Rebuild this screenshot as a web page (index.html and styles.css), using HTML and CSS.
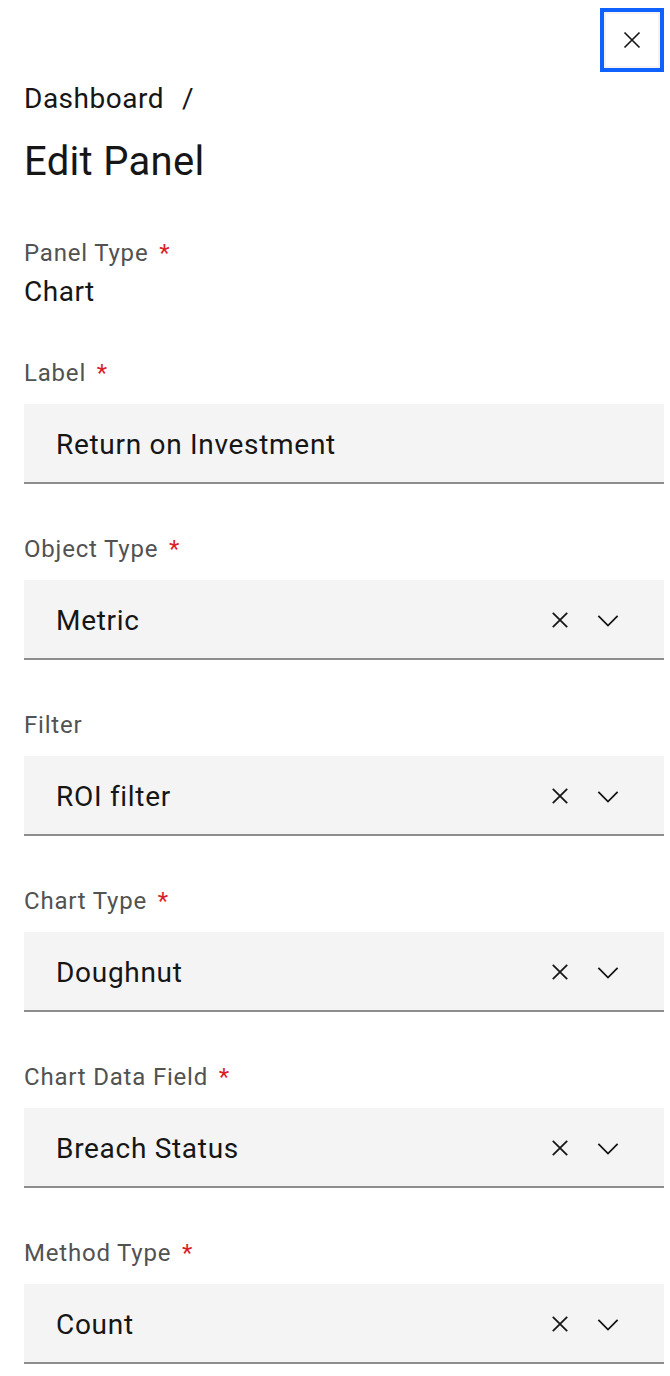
FILE: index.html
```html
<!DOCTYPE html>
<html lang="en">
<head>
<meta charset="utf-8">
<title>Edit Panel</title>
<link rel="stylesheet" href="styles.css">
</head>
<body>
<div class="panel">
  <div class="topbar">
    <button class="close-btn" aria-label="Close">
      <svg width="24" height="24" viewBox="0 0 24 24"><path d="M3 3L21 21M21 3L3 21" stroke="#161616" stroke-width="2" fill="none"/></svg>
    </button>
  </div>
  <nav class="breadcrumb"><span>Dashboard</span><span class="sep">/</span></nav>
  <h1 class="title">Edit Panel</h1>

  <div class="readonly">
    <div class="label">Panel Type <span class="req">*</span></div>
    <div class="value">Chart</div>
  </div>

  <div class="field">
    <div class="label">Label <span class="req">*</span></div>
    <div class="box"><span class="text">Return on Investment</span></div>
  </div>

  <div class="field">
    <div class="label">Object Type <span class="req">*</span></div>
    <div class="box"><span class="text">Metric</span>
      <span class="icons">
        <svg class="ic-x" width="20" height="20" viewBox="0 0 20 20"><path d="M2 2L18 18M18 2L2 18" stroke="#161616" stroke-width="2" fill="none"/></svg>
        <svg class="ic-chev" width="24" height="14" viewBox="0 0 24 14"><path d="M1.5 2L12 12.5L22.5 2" stroke="#161616" stroke-width="2" fill="none"/></svg>
      </span>
    </div>
  </div>

  <div class="field">
    <div class="label">Filter</div>
    <div class="box"><span class="text">ROI filter</span>
      <span class="icons">
        <svg class="ic-x" width="20" height="20" viewBox="0 0 20 20"><path d="M2 2L18 18M18 2L2 18" stroke="#161616" stroke-width="2" fill="none"/></svg>
        <svg class="ic-chev" width="24" height="14" viewBox="0 0 24 14"><path d="M1.5 2L12 12.5L22.5 2" stroke="#161616" stroke-width="2" fill="none"/></svg>
      </span>
    </div>
  </div>

  <div class="field">
    <div class="label">Chart Type <span class="req">*</span></div>
    <div class="box"><span class="text">Doughnut</span>
      <span class="icons">
        <svg class="ic-x" width="20" height="20" viewBox="0 0 20 20"><path d="M2 2L18 18M18 2L2 18" stroke="#161616" stroke-width="2" fill="none"/></svg>
        <svg class="ic-chev" width="24" height="14" viewBox="0 0 24 14"><path d="M1.5 2L12 12.5L22.5 2" stroke="#161616" stroke-width="2" fill="none"/></svg>
      </span>
    </div>
  </div>

  <div class="field">
    <div class="label">Chart Data Field <span class="req">*</span></div>
    <div class="box"><span class="text">Breach Status</span>
      <span class="icons">
        <svg class="ic-x" width="20" height="20" viewBox="0 0 20 20"><path d="M2 2L18 18M18 2L2 18" stroke="#161616" stroke-width="2" fill="none"/></svg>
        <svg class="ic-chev" width="24" height="14" viewBox="0 0 24 14"><path d="M1.5 2L12 12.5L22.5 2" stroke="#161616" stroke-width="2" fill="none"/></svg>
      </span>
    </div>
  </div>

  <div class="field">
    <div class="label">Method Type <span class="req">*</span></div>
    <div class="box"><span class="text">Count</span>
      <span class="icons">
        <svg class="ic-x" width="20" height="20" viewBox="0 0 20 20"><path d="M2 2L18 18M18 2L2 18" stroke="#161616" stroke-width="2" fill="none"/></svg>
        <svg class="ic-chev" width="24" height="14" viewBox="0 0 24 14"><path d="M1.5 2L12 12.5L22.5 2" stroke="#161616" stroke-width="2" fill="none"/></svg>
      </span>
    </div>
  </div>
</div>
</body>
</html>
```

FILE: styles.css
```css
* { box-sizing: border-box; }
html, body { margin: 0; padding: 0; background: #ffffff; }
body {
  font-family: Roboto, "Liberation Sans", sans-serif;
  color: #161616;
  width: 670px;
}
.panel {
  padding: 8px 6px 0 24px;
  display: flex;
  flex-direction: column;
}
.topbar {
  display: flex;
  justify-content: flex-end;
  height: 64px;
}
.close-btn {
  width: 64px;
  height: 64px;
  border: 4px solid #0f62fe;
  background: #ffffff;
  box-shadow: inset 0 0 0 2px #f4f4f4;
  display: flex;
  align-items: center;
  justify-content: center;
  padding: 0;
  margin: 0;
}
.close-btn svg { width: 20px; height: 20px; }
.breadcrumb {
  margin-top: 9px;
  font-size: 28px;
  line-height: 36px;
  letter-spacing: 0.5px;
  display: flex;
  gap: 18px;
}
.title {
  margin: 17px 0 0 0;
  font-size: 40px;
  line-height: 56px;
  font-weight: 400;
  letter-spacing: 0.3px;
}
.label {
  font-size: 24px;
  line-height: 32px;
  letter-spacing: 0.8px;
  color: #525252;
}
.req { color: #da1e28; margin-left: 4px; }
.readonly { margin-top: 47px; }
.value {
  font-size: 28px;
  line-height: 44px;
  letter-spacing: 0.5px;
  padding-top: 1px;
}
.field { margin-top: 43px; }
.field + .field { margin-top: 49px; }
.box {
  margin-top: 15px;
  height: 80px;
  background: #f4f4f4;
  border-bottom: 2px solid #8d8d8d;
  display: flex;
  align-items: center;
  padding: 2px 45px 0 32px;
}
.text {
  flex: 1;
  font-size: 28px;
  letter-spacing: 0.7px;
}
.icons {
  display: flex;
  align-items: center;
  gap: 28px;
}
.ic-x { width: 18px; height: 18px; }
.ic-chev { width: 22px; height: 13px; }
```
